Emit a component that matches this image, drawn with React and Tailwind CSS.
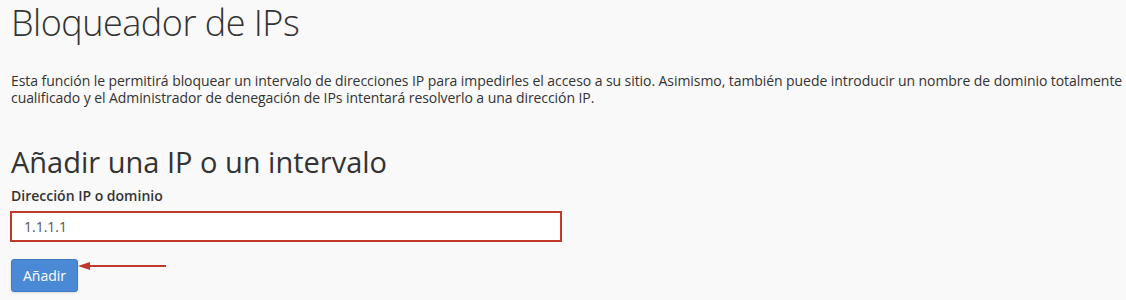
export default function App() {
  return (
    <div className="min-h-[300px] bg-[#f9f9f9] pl-[11px] text-[#333] font-['Open_Sans',sans-serif]">
      <h1 className="pt-px text-[36px] font-light leading-[44px] tracking-[-0.5px] text-[#333]">Bloqueador de IPs</h1>
      <p className="mt-[27px] text-[14px] leading-[17px] tracking-[-0.07px] text-[#333]">
        Esta función le permitirá bloquear un intervalo de direcciones IP para impedirles el acceso a su sitio. Asimismo, también puede introducir un nombre de dominio totalmente cualificado y el Administrador de denegación de IPs intentará resolverlo a una dirección IP.
      </p>
      <h2 className="mt-[38px] text-[29px] leading-[36px] text-[#333]">Añadir una IP o un intervalo</h2>
      <div className="mt-[7px] text-[14px] font-semibold leading-[18px]">Dirección IP o dominio</div>
      <input
        readOnly
        value="1.1.1.1"
        className="mt-[6px] block h-[31px] w-[552px] -ml-px border-2 border-[#c0392b] bg-white px-[12px] text-[14px] text-[#555] outline-none"
      />
      <div className="mt-[17px] flex items-center">
        <button className="h-[33px] w-[67px] rounded-[3px] border border-[#3d7bc4] bg-[#4a89d6] text-[14px] text-white shadow-sm">Añadir</button>
        <svg width="88" height="12" viewBox="0 0 88 12" className="-mt-[20px]">
          <line x1="8" y1="6" x2="88" y2="6" stroke="#c0392b" strokeWidth="2" />
          <polygon points="0,6 12,2 12,10" fill="#c0392b" />
        </svg>
      </div>
    </div>
  );
}
